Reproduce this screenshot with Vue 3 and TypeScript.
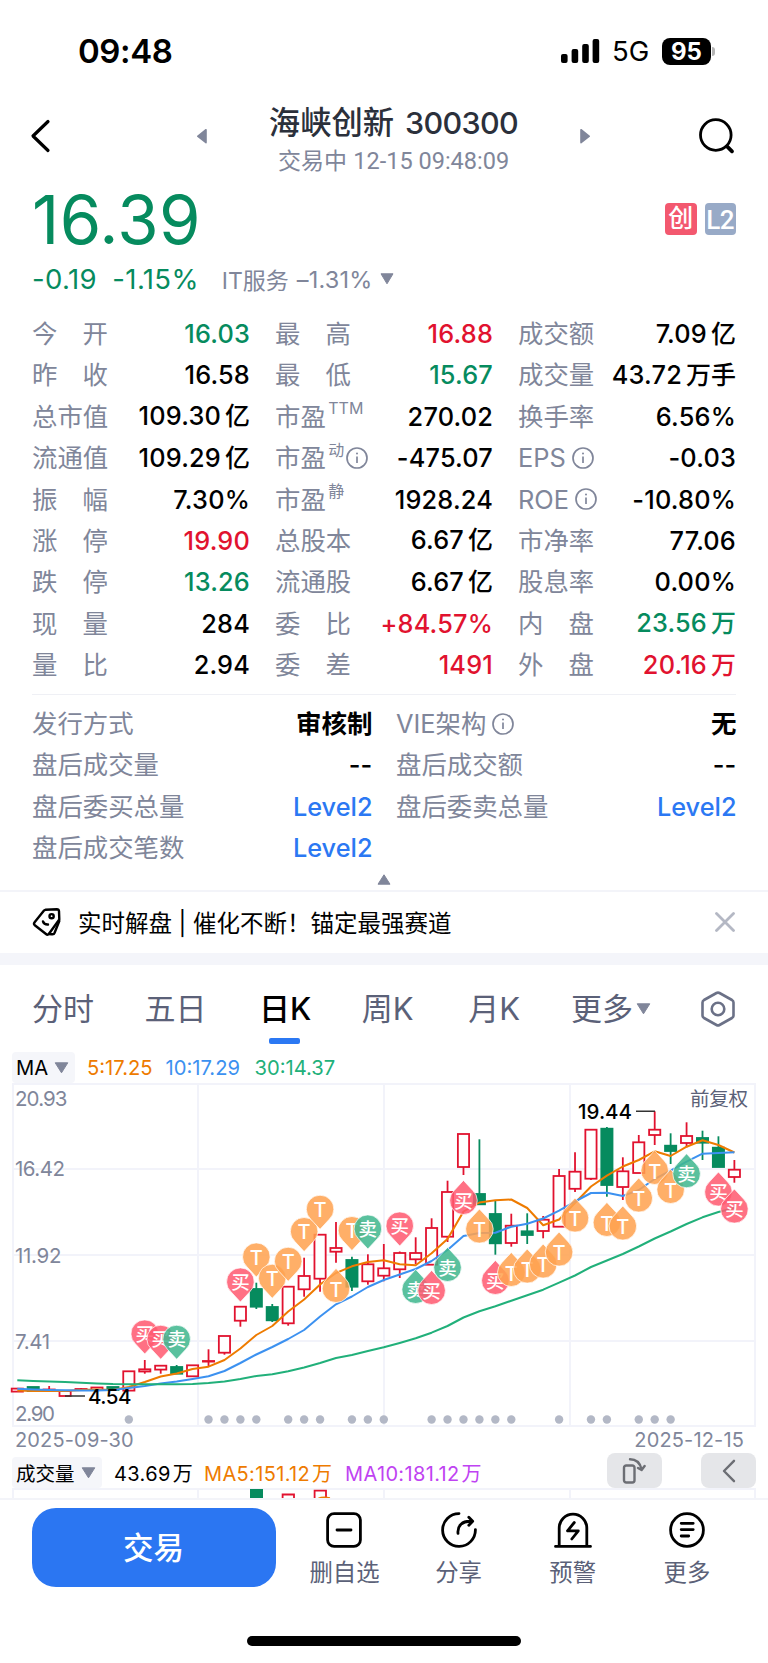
<script setup lang="ts">
type Tone = 'up' | 'down' | 'flat' | 'link'
interface Cell {
  label: string
  value: string
  unit?: string
  tone?: Tone
  sup?: string
  info?: boolean
}
interface Candle {
  up: boolean
  top: number
  bottom: number
  high?: number
  low?: number
}
interface Pin {
  i: number
  y: number
  text: string
  above?: boolean
}

const columns: Cell[][] = [
  [
    { label: '今开', value: '16.03', tone: 'down' },
    { label: '昨收', value: '16.58' },
    { label: '总市值', value: '109.30', unit: '亿' },
    { label: '流通值', value: '109.29', unit: '亿' },
    { label: '振幅', value: '7.30%' },
    { label: '涨停', value: '19.90', tone: 'up' },
    { label: '跌停', value: '13.26', tone: 'down' },
    { label: '现量', value: '284' },
    { label: '量比', value: '2.94' },
  ],
  [
    { label: '最高', value: '16.88', tone: 'up' },
    { label: '最低', value: '15.67', tone: 'down' },
    { label: '市盈', sup: 'TTM', value: '270.02' },
    { label: '市盈', sup: '动', info: true, value: '-475.07' },
    { label: '市盈', sup: '静', value: '1928.24' },
    { label: '总股本', value: '6.67', unit: '亿' },
    { label: '流通股', value: '6.67', unit: '亿' },
    { label: '委比', value: '+84.57%', tone: 'up' },
    { label: '委差', value: '1491', tone: 'up' },
  ],
  [
    { label: '成交额', value: '7.09', unit: '亿' },
    { label: '成交量', value: '43.72', unit: '万手' },
    { label: '换手率', value: '6.56%' },
    { label: 'EPS', info: true, value: '-0.03' },
    { label: 'ROE', info: true, value: '-10.80%' },
    { label: '市净率', value: '77.06' },
    { label: '股息率', value: '0.00%' },
    { label: '内盘', value: '23.56', unit: '万', tone: 'down' },
    { label: '外盘', value: '20.16', unit: '万', tone: 'up' },
  ],
]

const extra: Cell[][] = [
  [
    { label: '发行方式', value: '', unit: '审核制' },
    { label: '盘后成交量', value: '--' },
    { label: '盘后委买总量', value: 'Level2', tone: 'link' },
    { label: '盘后成交笔数', value: 'Level2', tone: 'link' },
  ],
  [
    { label: 'VIE架构', info: true, value: '', unit: '无' },
    { label: '盘后成交额', value: '--' },
    { label: '盘后委卖总量', value: 'Level2', tone: 'link' },
  ],
]

const isSpread = (c: Cell) => c.label.length === 2 && !c.sup

const tabs = ['分时', '五日', '日K', '周K', '月K']

const cx = (i: number) => 17.3 + 15.935 * i

const raw: [number, number, number, number?, number?][] = [
  [1, 1388.6, 1391.6], [0, 1387, 1391], [1, 1389.5, 1390.5, 1386], [1, 1391, 1396],
  [1, 1389, 1390, 1388], [1, 1387.5, 1390], [0, 1387, 1390], [1, 1371.3, 1390.6],
  [1, 1369.3, 1371.5, 1360, 1373.7], [1, 1365.7, 1369.6, 1365, 1373.7], [0, 1367, 1373.7, 1365],
  [1, 1365.3, 1376.3], [1, 1361, 1361.6, 1349.3, 1366], [1, 1336, 1352.7, 1336, 1354.7],
  [1, 1306.7, 1320.7, 1306.7, 1326.7], [0, 1289, 1306.7, 1282.7, 1309], [0, 1307, 1320.3, 1304, 1322],
  [1, 1286.7, 1323.3, 1286.7, 1325.7], [1, 1276, 1289.3, 1257.7, 1296.7], [1, 1234.7, 1278.7, 1234.7, 1291.7],
  [1, 1248, 1251.7, 1222, 1262.7], [0, 1260, 1286.7, 1256.7, 1291], [1, 1264.3, 1281.3, 1254.3, 1284.7],
  [1, 1268.3, 1275.7, 1244, 1281.3], [1, 1253, 1269.3, 1251.5, 1278], [1, 1253, 1259.3, 1237.3, 1264],
  [1, 1228, 1264.7, 1218.3], [1, 1192, 1236.7, 1180.7, 1242], [1, 1134, 1167, 1134, 1175],
  [0, 1194, 1204.3, 1139.3], [0, 1214, 1243.3, 1200.7, 1254.7], [1, 1225.7, 1243, 1213.7, 1246.7],
  [0, 1231.3, 1235, 1213.3, 1244], [1, 1219.7, 1231, 1216, 1238.3], [1, 1176, 1226.7, 1169],
  [1, 1171.7, 1188.8, 1152.3, 1192], [1, 1129.7, 1178.7, 1129.7, 1180], [0, 1128.7, 1185, 1127, 1196.7],
  [1, 1171.3, 1187, 1157.3, 1200], [1, 1142.3, 1173, 1135], [1, 1129.7, 1135, 1111.3, 1145],
  [0, 1145.7, 1151, 1133.3, 1164], [1, 1136, 1143, 1122.3, 1147.3], [0, 1138, 1142.7, 1130.7, 1160],
  [0, 1147.7, 1167, 1136.3], [1, 1169.7, 1177, 1160, 1182.7],
]
const candles: Candle[] = raw.map(([up, top, bottom, high, low]) => ({ up: up === 1, top, bottom, high, low }))

const ma5 = [
  1390.5, 1391, 1391, 1391, 1390, 1389.5, 1390, 1387, 1382, 1376.5, 1373.5, 1369, 1366.7, 1360, 1348.5, 1335,
  1326, 1311.5, 1299.5, 1284.5, 1273, 1266.3, 1262, 1260.3, 1264.3, 1265.3, 1253.3, 1239, 1211.5, 1202.5,
  1200.3, 1199.5, 1208, 1225.3, 1219.5, 1203, 1186.5, 1175.7, 1166.5, 1160, 1151.3, 1156, 1146.7, 1140.3, 1145, 1152.5,
]
const ma10 = [
  1388.8, 1389.5, 1390, 1390.3, 1390.5, 1390.5, 1390, 1388, 1386, 1383.5, 1381.5, 1379, 1376.3, 1371, 1363, 1354.5,
  1347, 1339, 1330, 1316.5, 1304.3, 1296.5, 1287, 1280, 1274.5, 1269, 1261, 1250, 1236, 1233,
  1232.7, 1226.7, 1223.7, 1218.5, 1210.7, 1201.5, 1193, 1192.7, 1196, 1190, 1179, 1170.7, 1161.7, 1153.7, 1153, 1152.3,
]
const ma30 = [
  1380.3, 1381, 1381.5, 1382, 1382.7, 1383.4, 1384, 1384.2, 1384.2, 1384.2, 1384.2, 1384, 1383, 1381.5, 1379, 1376,
  1374.3, 1371.3, 1367.5, 1363, 1358, 1355, 1351, 1347.3, 1343, 1338.3, 1332.7, 1326, 1317.5, 1311.3,
  1306.3, 1300.7, 1295.3, 1289.7, 1282.7, 1275.5, 1267, 1260.5, 1254, 1246.5, 1238.5, 1231.5, 1224, 1217.3, 1212, 1208,
]
const line = (ys: number[]) => ys.map((y, i) => `${cx(i).toFixed(1)},${y}`).join(' ')

const p = (i: number, y: number, text: string, above = false): Pin => ({ i, y, text, above })
const pins: Pin[] = [
  p(8, 1333.7, '买', true), p(9, 1339, '买', true), p(10, 1339, '卖', true), p(14, 1281.7, '买', true),
  p(15, 1256.7, 'T', true), p(16, 1278, 'T', true), p(17, 1261, 'T', true), p(18, 1231.3, 'T', true),
  p(19, 1209, 'T', true), p(20, 1288.7, 'T'), p(21, 1230.3, 'T', true), p(22, 1228.7, '卖', true),
  p(24, 1225.7, '买', true), p(25, 1289.7, '卖'), p(26, 1290.7, '买'), p(27, 1267.7, '卖'),
  p(28, 1200.7, '买'), p(29, 1229.3, 'T'), p(30, 1280.7, '买'), p(31, 1272.7, 'T'), p(32, 1269.3, 'T'),
  p(33, 1264.3, 'T'), p(34, 1252.3, 'T'), p(35, 1218.3, 'T'), p(37, 1222.7, 'T'), p(38, 1226.3, 'T'),
  p(39, 1198.3, 'T'), p(40, 1170.7, 'T'), p(41, 1189.7, 'T'), p(42, 1174, '卖'), p(44, 1192.3, '买'), p(45, 1209.3, '买'),
]
const pinColor: Record<string, string> = { 买: '#ff5a70', 卖: '#3fb78e', T: '#ffa24f' }

const dots = [7, 12, 13, 14, 15, 17, 18, 19, 21, 22, 23, 26, 27, 28, 29, 30, 31, 34, 36, 37, 39, 40, 41]

const axis = [
  { t: '20.93', y: 1106.3, w: 52.5 },
  { t: '16.42', y: 1176.4, w: 50 },
  { t: '11.92', y: 1262.6, w: 46.5 },
  { t: '7.41', y: 1348.6, w: 35 },
  { t: '2.90', y: 1421, w: 40 },
]
</script>

<template>
  <div class="screen">
    <header class="status">
      <span class="clock">09:48</span>
      <div class="signals">
        <svg class="bars" width="40" height="26" viewBox="0 0 40 26">
          <rect x="1" y="16" width="6.6" height="9" rx="2" />
          <rect x="11.6" y="11" width="6.6" height="14" rx="2" />
          <rect x="22.2" y="6" width="6.6" height="19" rx="2" />
          <rect x="32.6" y="1" width="6.6" height="24" rx="2" />
        </svg>
        <span class="net">5G</span>
        <span class="battery"><b>95</b></span>
        <i class="nub"></i>
      </div>
    </header>

    <nav class="nav">
      <svg class="back" width="22" height="68" viewBox="0 0 22 68">
        <path d="M18 19.5 L3 34 L18 48.5" fill="none" stroke="#000" stroke-width="3.2" stroke-linecap="round" stroke-linejoin="round" />
      </svg>
      <svg class="prev" width="10" height="68" viewBox="0 0 10 68"><path d="M9.8 27.8v12.8a.9.9 0 0 1-1.300.7L.5 35a1 1 0 0 1 0-1.600L8.500 27.100a.9.9 0 0 1 1.300.7z" fill="#80869a" /></svg>
      <div class="heading">
        <h1>海峡创新<span>300300</span></h1>
        <p>交易中 <span>12-15 09:48:09</span></p>
      </div>
      <svg class="next" width="10" height="68" viewBox="0 0 10 68"><path d="M.2 27.800v12.800a.9.9 0 0 0 1.300.7L9.500 35a1 1 0 0 0 0-1.600L1.500 27.100a.9.9 0 0 0-1.300.7z" fill="#80869a" /></svg>
      <svg class="search" width="38" height="68" viewBox="0 0 38 68">
        <circle cx="17.800" cy="33" r="15.300" fill="none" stroke="#000" stroke-width="2.800" />
        <path d="M29.300 44.700 L34 49.300" stroke="#000" stroke-width="3.800" stroke-linecap="round" />
      </svg>
    </nav>

    <section class="quote">
      <strong>16.39</strong>
      <div class="badges"><span class="badge hot">创</span><span class="badge l2">L2</span></div>
    </section>
    <section class="change">
      <span class="diff">-0.19</span>
      <span class="pct">-1.15%</span>
      <span class="sector">IT服务</span><span class="sector-pct">–1.31%</span>
      <svg width="14" height="12" viewBox="0 0 14 12"><path d="M1 .8h12L7 10.800z" fill="#80869a" stroke="#80869a" stroke-linejoin="round" /></svg>
    </section>

    <section class="stats">
      <div v-for="(col, c) in columns" :key="c" class="col">
        <div v-for="cell in col" :key="cell.label + (cell.sup ?? '')" class="row">
          <span class="label" :class="{ spread: isSpread(cell) }">
            <template v-if="isSpread(cell)"><i>{{ cell.label[0] }}</i><i>{{ cell.label[1] }}</i></template>
            <template v-else>{{ cell.label }}</template>
          </span>
          <sup v-if="cell.sup">{{ cell.sup }}</sup>
          <svg v-if="cell.info" class="info" :class="{ tight: cell.sup }" width="22" height="22" viewBox="0 0 22 22">
            <circle cx="11" cy="11" r="10" /><path d="M11 9.500V16" /><circle class="dot" cx="11" cy="6.500" r="1" />
          </svg>
          <span class="value" :class="cell.tone">{{ cell.value }}<em v-if="cell.unit">{{ cell.unit }}</em></span>
        </div>
      </div>
    </section>

    <hr class="rule" />
    <section class="stats extra">
      <div v-for="(col, c) in extra" :key="c" class="col">
        <div v-for="cell in col" :key="cell.label" class="row">
          <span class="label">{{ cell.label }}</span>
          <svg v-if="cell.info" class="info" width="22" height="22" viewBox="0 0 22 22">
            <circle cx="11" cy="11" r="10" /><path d="M11 9.500V16" /><circle class="dot" cx="11" cy="6.500" r="1" />
          </svg>
          <span class="value" :class="[cell.tone, { word: !cell.value }]">{{ cell.value }}<em v-if="cell.unit">{{ cell.unit }}</em></span>
        </div>
      </div>
    </section>
    <div class="fold">
      <svg width="14" height="11" viewBox="0 0 14 11"><path d="M1 10.200h12L7 .8z" fill="#80869a" stroke="#80869a" stroke-linejoin="round" /></svg>
    </div>

    <section class="promo">
      <svg width="30" height="30" viewBox="0 0 30 30" fill="none" stroke="#000" stroke-width="2.400" stroke-linejoin="round" stroke-linecap="round">
        <path d="M13.500 2.700 L24.800 2.200 Q26.800 2.200 27 4.200 L27.300 12.500 L16.800 27 Q15.500 28.300 14 27 L2.800 18.200 Q1.300 16.800 2.600 15.200 L12 3.500z" />
        <path d="M27.300 14 L22.600 25.800 Q22 27.600 19.600 27.200 L16.800 27" />
        <circle cx="19.600" cy="9.200" r="2.100" />
        <path d="M11 14.500 Q12.200 17.800 16 17.500" />
      </svg>
      <span>实时解盘 | 催化不断！锚定最强赛道</span>
      <svg class="close" width="20" height="20" viewBox="0 0 20 20"><path d="M1.500 1.500l17 17M18.500 1.500l-17 17" stroke="#b4b8c4" stroke-width="2.800" stroke-linecap="round" /></svg>
    </section>

    <div class="tabs">
      <span v-for="t in tabs" :key="t" class="tab" :class="{ active: t === '日K' }">{{ t }}</span>
      <span class="tab more">更多<svg width="15" height="12" viewBox="0 0 15 12"><path d="M1.200.8h12.600L7.500 10.800z" fill="#80869a" stroke="#80869a" stroke-linejoin="round" /></svg></span>
      <svg class="hex" width="34" height="36" viewBox="0 0 34 36" fill="none" stroke="#6b7187" stroke-width="2.600" stroke-linejoin="round">
        <path d="M15.500 2 Q17 1.200 18.500 2 L31 9 Q32.500 10 32.500 11.500 V24.500 Q32.500 26 31 27 L18.500 34 Q17 34.800 15.500 34 L3 27 Q1.500 26 1.500 24.500 V11.500 Q1.500 10 3 9z" />
        <circle cx="17" cy="18" r="6.300" />
      </svg>
    </div>

    <div class="legend">
      <span class="chip">MA<svg width="15" height="12" viewBox="0 0 15 12"><path d="M1.200.8h12.600L7.500 10.800z" fill="#80869a" stroke="#80869a" stroke-linejoin="round" /></svg></span>
      <span class="m5">5:17.25</span><span class="m10">10:17.29</span><span class="m30">30:14.37</span>
    </div>

    <svg class="chart" width="768" height="345" viewBox="0 1083 768 345">
      <g stroke="#f2f3fa" stroke-width="2" fill="none">
        <rect x="13" y="1084" width="742" height="342" />
        <path d="M13 1169H755M13 1255H755M13 1341H755M198 1084V1426M384 1084V1426M570 1084V1426" />
      </g>
      <text v-for="a in axis" :key="a.t" class="axis" x="15" :y="a.y" :textLength="a.w">{{ a.t }}</text>
      <text class="adj" x="690" y="1105.800" textLength="58">前复权</text>
      <circle v-for="d in dots" :key="d" :cx="cx(d)" cy="1419.500" r="4.200" fill="#b3b8c6" />
      <g v-for="(k, i) in candles" :key="i" :class="k.up ? 'rise' : 'drop'">
        <path v-if="k.high" :d="`M${cx(i)} ${k.high}V${k.top}`" />
        <path v-if="k.low" :d="`M${cx(i)} ${k.bottom}V${k.low}`" />
        <rect :x="cx(i) - 5.600" :y="k.top" width="11.200" :height="k.bottom - k.top" />
      </g>
      <g fill="none" stroke-width="2" stroke-linejoin="round">
        <polyline :points="line(ma5)" stroke="#ee7b00" />
        <polyline :points="line(ma10)" stroke="#3c91f0" />
        <polyline :points="line(ma30)" stroke="#21b07a" />
      </g>
      <path d="M65 1396H85M636 1111.300H655" stroke="#333" stroke-width="1.400" />
      <text class="mark" x="88" y="1403.500" textLength="43.500">4.54</text>
      <text class="mark" x="578" y="1118.700" textLength="54">19.44</text>
      <g v-for="pin in pins" :key="'p' + pin.i" :transform="`translate(${cx(pin.i)} ${pin.y})`">
        <path
          :transform="pin.above ? '' : 'scale(1 -1)'"
          d="M0 20.300 L-9.300 10.200 A13.800 13.800 0 1 1 9.300 10.200 Z"
          :fill="pinColor[pin.text]" fill-opacity=".86" stroke="#fff" stroke-width=".9" stroke-opacity=".8"
        />
        <text class="pin-text" :class="{ cjk: pin.text !== 'T' }" :y="pin.text === 'T' ? 7.800 : 6.900">{{ pin.text }}</text>
      </g>
    </svg>

    <div class="dates"><span>2025-09-30</span><span>2025-12-15</span></div>

    <div class="volume">
      <span class="chip">成交量<svg width="15" height="12" viewBox="0 0 15 12"><path d="M1.200.8h12.600L7.500 10.800z" fill="#80869a" stroke="#80869a" stroke-linejoin="round" /></svg></span>
      <span class="v0">43.69<em>万</em></span>
      <span class="v5">MA5:151.12<em>万</em></span>
      <span class="v10">MA10:181.12<em>万</em></span>
      <span class="tool rotate">
        <svg width="24" height="28" viewBox="0 0 24 28" fill="none" stroke="#6c6e74" stroke-width="2.400" stroke-linecap="round" stroke-linejoin="round">
          <rect x="2" y="8.500" width="10.500" height="17" rx="2.200" />
          <path d="M8 2.200 C14 2.200 18 6 19.500 12 M16 11 L19.600 13 L22.600 9" />
        </svg>
      </span>
      <span class="tool">
        <svg width="14" height="24" viewBox="0 0 14 24"><path d="M12 1.800L2 12l10 10.200" fill="none" stroke="#6c6e74" stroke-width="2.400" stroke-linecap="round" stroke-linejoin="round" /></svg>
      </span>
    </div>
    <svg class="volchart" width="768" height="10" viewBox="0 1488 768 10">
      <path d="M13 1500V1489H755V1500M198 1489V1500M384 1489V1500M570 1489V1500" fill="none" stroke="#f2f3fa" stroke-width="2" />
      <rect x="250" y="1489" width="13" height="10" fill="#068b5e" />
      <path d="M282.600 1500V1494.500H294V1500M314.600 1500V1490.700H326V1500" fill="none" stroke="#e1122f" stroke-width="1.800" />
      <path d="M317.500 1499 Q322 1496.500 330 1498" fill="none" stroke="#ee7b00" stroke-width="1.700" />
    </svg>

    <footer class="bottom">
      <button class="trade">交易</button>
      <div class="action">
        <svg width="40" height="40" viewBox="0 0 40 40"><rect x="3.600" y="3.600" width="32.800" height="32.800" rx="6.500" /><path d="M13 20h14" /></svg>
        <span>删自选</span>
      </div>
      <div class="action">
        <svg width="40" height="40" viewBox="0 0 40 40"><path d="M20 3.600A16.400 16.400 0 1 0 36.400 19.600" /><path d="M19 23.300C18.200 15.500 23.500 10.800 32 11.300M29.800 7.300L33.700 11.300L29.800 15.300" /></svg>
        <span>分享</span>
      </div>
      <div class="action">
        <svg width="40" height="40" viewBox="0 0 40 40"><path d="M2.500 36.400h35M6.200 36V18a13.800 13.800 0 0 1 27.600 0V36" /><path d="M21.300 12.500L14.500 20.800H25.300L18.800 29" /></svg>
        <span>预警</span>
      </div>
      <div class="action">
        <svg width="40" height="40" viewBox="0 0 40 40"><circle cx="20" cy="20" r="16.400" /><path d="M14.200 13.300h12M14.200 19.600h12M14.200 26h7.500" /></svg>
        <span>更多</span>
      </div>
    </footer>
    <div class="home"><i></i></div>
  </div>
</template>

<style>
body {
  background: #fff;
}
</style>

<style scoped>
.screen {
  width: 768px;
  height: 1663px;
  overflow: hidden;
  background: #fff;
  color: #000;
  font-family: Inter, 'Noto Sans CJK SC', sans-serif;
  display: flex;
  flex-direction: column;
}
.screen > * {
  flex-shrink: 0;
  box-sizing: border-box;
}
svg {
  display: block;
  flex-shrink: 0;
}
i,
em {
  font-style: normal;
}
span {
  white-space: nowrap;
}
.status {
  height: 102px;
  padding: 0 53px 0 78px;
  display: flex;
  align-items: center;
  justify-content: space-between;
}
.clock {
  font-size: 33px;
  font-weight: 600;
  letter-spacing: -0.400px;
}
.signals {
  display: flex;
  align-items: center;
}
.net {
  font-size: 27.500px;
  margin-left: 12px;
  width: 50px;
}
.battery {
  width: 49px;
  height: 27px;
  border-radius: 8px;
  background: #000;
  color: #fff;
  display: flex;
  align-items: center;
  justify-content: center;
  font-size: 24px;
}
.nub {
  width: 3px;
  height: 9px;
  border-radius: 0 4px 4px 0;
  background: #b5b5b5;
  margin-left: 1px;
}
.nav {
  height: 78px;
  display: flex;
  align-items: flex-start;
  padding: 0 32px 0 30px;
}
.prev {
  margin-left: 145px;
}
.heading {
  width: 373px;
  text-align: center;
}
.search {
  margin-left: auto;
}
h1 {
  margin: 0;
  font-size: 31.300px;
  line-height: 41px;
  font-weight: 500;
  color: #2b303b;
}
h1 span {
  margin-left: 11px;
  font-size: 30.500px;
  letter-spacing: -0.650px;
}
.heading p {
  margin: 0;
  font-size: 23px;
  line-height: 34px;
  color: #80869a;
}
.heading p span {
  font-family: Roboto, sans-serif;
  font-size: 23.500px;
}
.quote {
  height: 77px;
  padding: 0 32px;
  display: flex;
  align-items: center;
  justify-content: space-between;
}
.quote strong {
  font-size: 67px;
  line-height: 79px;
  font-weight: 400;
  letter-spacing: 0.400px;
  margin-bottom: -2px;
  color: #068b5e;
}
.badges {
  display: flex;
  gap: 8px;
}
.badge {
  width: 31.500px;
  height: 32px;
  border-radius: 4px;
  line-height: 31px;
  text-align: center;
  color: #fff;
  font-size: 25px;
  font-weight: 500;
}
.badge.hot {
  background: #f3586f;
}
.badge.l2 {
  background: #98aac7;
  font-family: Roboto, sans-serif;
  font-size: 26px;
  line-height: 35px;
  letter-spacing: -0.500px;
}
.change {
  height: 44px;
  padding: 0 32px;
  display: flex;
  align-items: center;
  font-size: 27.500px;
  letter-spacing: 0.350px;
  color: #068b5e;
}
.pct {
  margin-left: 15.500px;
}
.sector,
.sector-pct {
  color: #80869a;
  font-size: 23px;
  letter-spacing: 0;
}
.sector {
  margin-left: 23px;
}
.sector-pct {
  font-size: 23.500px;
  letter-spacing: 0.200px;
  margin: 0 7px 0 8px;
}
.stats {
  display: flex;
  padding: 0 32px;
}
.col {
  width: 217.500px;
}
.stats:not(.extra) {
  margin-top: 12px;
  gap: 25.500px;
}
.stats.extra {
  margin-top: 8px;
  gap: 24px;
}
.extra .col {
  width: 340px;
}
.row {
  height: 41.400px;
  display: flex;
  align-items: center;
  line-height: 41.400px;
}
.label {
  font-size: 25.400px;
  color: #80869a;
}
.label.spread {
  width: 76px;
  display: flex;
  justify-content: space-between;
}
sup {
  font-size: 16px;
  line-height: 20px;
  color: #80869a;
  margin: 0 0 16px 2.500px;
}
.info {
  margin-left: 6px;
  fill: none;
  stroke: #80869a;
  stroke-width: 1.700px;
}
.info.tight {
  margin-left: 2px;
}
.info .dot {
  fill: #80869a;
  stroke: none;
}
.value {
  margin-left: auto;
  margin-right: -0.500px;
  font-size: 25.300px;
  font-weight: 500;
  letter-spacing: 0.200px;
}
.value em {
  margin-left: 4px;
  font-size: 25px;
  letter-spacing: 0;
}
.value.word em {
  margin-left: 0;
  font-size: 25.500px;
  font-weight: 700;
}
.up {
  color: #e1122f;
}
.down {
  color: #068b5e;
}
.link {
  color: #2b78f3;
  letter-spacing: 0;
}
.rule {
  width: 704px;
  height: 1px;
  margin: 8.500px 32px 0;
  border: 0;
  background: #eff0f5;
}
.fold {
  height: 21.500px;
  display: flex;
  justify-content: center;
  align-items: center;
}
.promo {
  height: 75px;
  border-top: 2px solid #f3f4f9;
  border-bottom: 12px solid #f4f5fa;
  padding: 0 33.500px 2px 32px;
  display: flex;
  align-items: center;
  font-size: 23.500px;
}
.promo span {
  margin-left: 16px;
}
.close {
  margin-left: auto;
}
.tabs {
  height: 87px;
  padding: 0 33px 0 32px;
  display: flex;
  justify-content: space-between;
  align-items: center;
  font-size: 31px;
  color: #5b6178;
}
.tab {
  position: relative;
  line-height: 87px;
}
.tab:nth-child(2),
.tab:nth-child(4) {
  margin: 0 1px 0 -1px;
}
.tab:nth-child(5) {
  margin: 0 -2px 0 2px;
}
.tab.active {
  color: #000;
  font-weight: 500;
}
.tab.active::after {
  content: '';
  position: absolute;
  left: 50%;
  bottom: 8px;
  width: 31px;
  height: 6px;
  margin-left: -16px;
  border-radius: 2px;
  background: #2b78f3;
}
.tab.more {
  display: flex;
  align-items: center;
  gap: 3px;
  margin: 0 -1.500px 0 1.500px;
}
.legend {
  height: 31px;
  padding-left: 12px;
  display: flex;
  align-items: center;
  font-size: 20.200px;
}
.chip {
  height: 31px;
  box-sizing: border-box;
  padding: 0 6px 0 4px;
  border-radius: 4px;
  background: #f5f6fa;
  display: flex;
  align-items: center;
  justify-content: space-between;
}
.legend .chip {
  width: 63px;
}
.m5 {
  color: #ee7b00;
  margin-left: 12px;
  width: 78.500px;
}
.m10 {
  color: #3c91f0;
  width: 89px;
}
.m30 {
  color: #21b07a;
}
.axis {
  font-size: 20.500px;
  fill: #80869a;
}
.adj {
  font-size: 19.500px;
  fill: #5b6178;
}
.mark {
  font-size: 20.500px;
  font-weight: 500;
  fill: #000;
}
.rise {
  fill: #fff;
  stroke: #e1122f;
  stroke-width: 1.800px;
}
.drop {
  fill: #068b5e;
  stroke: #068b5e;
  stroke-width: 1.800px;
}
.pin-text {
  fill: #fff;
  font-size: 20px;
  font-weight: 500;
  text-anchor: middle;
}
.pin-text.cjk {
  font-size: 18.500px;
}
.dates {
  height: 25px;
  padding: 0 24px 2px 15px;
  display: flex;
  justify-content: space-between;
  align-items: center;
  font-size: 20px;
  letter-spacing: 0.150px;
  color: #80869a;
}
.volume {
  height: 35px;
  padding: 0 12px;
  display: flex;
  align-items: center;
  font-size: 20px;
  letter-spacing: 0.350px;
}
.volume .chip {
  width: 90px;
  margin-top: 4px;
  font-size: 19.500px;
  letter-spacing: 0;
}
.volume em {
  margin-left: 2px;
}
.v0,
.v5,
.v10 {
  margin-top: 3px;
}
.v0 {
  margin-left: 12px;
  width: 90px;
}
.v5 {
  color: #ee7b00;
  width: 141px;
}
.v10 {
  color: #bf43f2;
}
.tool {
  width: 55px;
  height: 35px;
  border-radius: 8px;
  background: #e5e6e9;
  display: flex;
  align-items: center;
  justify-content: center;
}
.rotate {
  margin-left: auto;
  margin-right: 39.500px;
}
.bottom {
  height: 95px;
  border-top: 2px solid #f3f4f9;
  padding: 8px 24px 0 32px;
  display: flex;
}
.trade {
  width: 244px;
  height: 79px;
  border: 0;
  border-radius: 24px;
  background: #2b76f2;
  color: #fff;
  font: 500 30.500px/76px 'Noto Sans CJK SC', sans-serif;
  padding: 0 1px 3px 0;
  margin-right: 11.500px;
}
.action {
  width: 114.200px;
  display: flex;
  flex-direction: column;
  align-items: center;
  font-size: 23.400px;
  color: #5b6178;
}
.action svg {
  margin-top: 2px;
  fill: none;
  stroke: #000;
  stroke-width: 2.800px;
  stroke-linecap: round;
  stroke-linejoin: round;
}
.action span {
  line-height: 34px;
  margin-top: 6px;
}
.home {
  flex: 1;
  display: flex;
  justify-content: center;
  align-items: flex-end;
  padding-bottom: 17px;
}
.home i {
  width: 274px;
  height: 10px;
  border-radius: 5px;
  background: #000;
}
</style>
